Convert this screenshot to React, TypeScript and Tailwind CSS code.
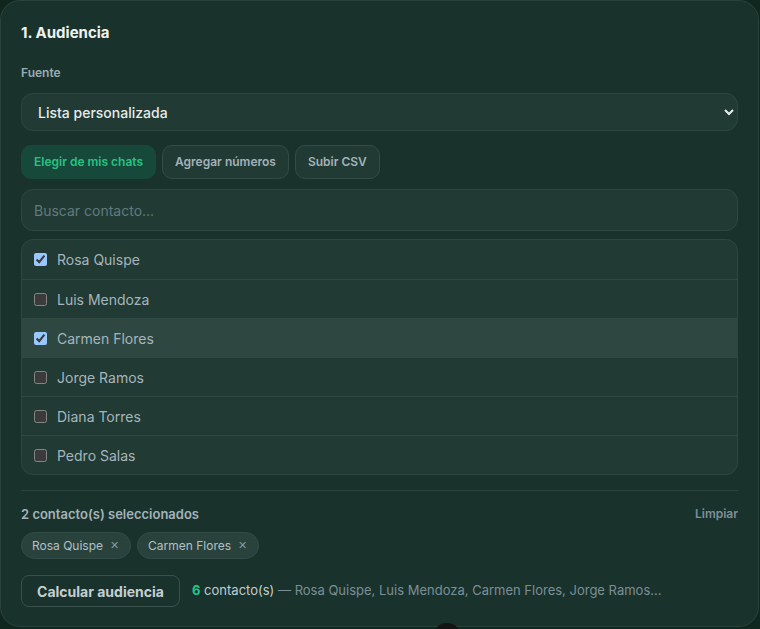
import { useState } from "react";

interface Contact {
  id: number;
  name: string;
}

const contacts: Contact[] = [
  { id: 1, name: "Rosa Quispe" },
  { id: 2, name: "Luis Mendoza" },
  { id: 3, name: "Carmen Flores" },
  { id: 4, name: "Jorge Ramos" },
  { id: 5, name: "Diana Torres" },
  { id: 6, name: "Pedro Salas" },
];

const sources = ["Elegir de mis chats", "Agregar números", "Subir CSV"];

export default function App() {
  const [selected, setSelected] = useState<number[]>([1, 3]);
  const [tab, setTab] = useState(0);
  const hovered = 3;

  const toggle = (id: number) =>
    setSelected((s) => (s.includes(id) ? s.filter((x) => x !== id) : [...s, id]));

  const chosen = contacts.filter((c) => selected.includes(c.id));

  return (
    <div className="relative h-[629px] w-[760px] overflow-hidden bg-[#10271f] font-['Inter','Noto_Sans',sans-serif]">
      <div className="flex h-[627px] w-[759px] flex-col rounded-[20px] border border-[#2a423c] bg-[#1a322c] px-5 pt-[21px]">
        <h2 className="text-[15px] leading-[22px] font-bold text-[#eef3f2]">1. Audiencia</h2>

        <label className="mt-[21px] text-xs leading-4 font-semibold text-[#9aabb3]">Fuente</label>
        <select
          defaultValue="custom"
          className="mt-3 h-[38px] w-full rounded-xl border border-[#2f4741] bg-[#223a34] pr-2 pl-3 text-[14px] font-medium text-[#e6ecec] outline-none scheme-dark"
        >
          <option value="custom">Lista personalizada</option>
          <option value="all">Todos mis chats</option>
        </select>

        <div className="mt-[14px] flex gap-1.5">
          {sources.map((s, i) => (
            <button
              key={s}
              onClick={() => setTab(i)}
              className={
                i === tab
                  ? "h-[34px] rounded-[10px] border border-[#17493b] bg-[#17493b] px-3 text-xs font-semibold text-[#27c283]"
                  : "h-[34px] rounded-[10px] border border-[#344c46] bg-[#223a34] px-3 text-xs font-semibold text-[#a2b2ba]"
              }
            >
              {s}
            </button>
          ))}
        </div>

        <input
          placeholder="Buscar contacto..."
          className="mt-2.5 h-[42px] w-full rounded-xl border border-[#2f4741] bg-[#223a34] px-3 text-[14px] text-[#e6ecec] outline-none placeholder:text-[#607a7e]"
        />

        <div className="mt-2 overflow-hidden rounded-xl border border-[#2f4741] bg-[#213a33]">
          {contacts.map((c, i) => (
            <label
              key={c.id}
              className={
                "flex h-[39px] items-center gap-2.5 px-3 text-[14px] text-[#a6b5bd] " +
                (i > 0 ? "border-t border-[#304943] " : "") +
                (c.id === hovered ? "bg-[#2e4741]" : "")
              }
            >
              <input
                type="checkbox"
                checked={selected.includes(c.id)}
                onChange={() => toggle(c.id)}
                className="m-0 h-[13px] w-[13px] scheme-dark"
              />
              {c.name}
            </label>
          ))}
        </div>

        <div className="mt-[15px] border-t border-[#2a433d]" />

        <div className="mt-[14px] flex items-center justify-between">
          <span className="text-[13px] leading-[18px] font-semibold text-[#a3b2ba]">
            {chosen.length} contacto(s) seleccionados
          </span>
          <button onClick={() => setSelected([])} className="text-xs font-semibold text-[#7d8f98]">
            Limpiar
          </button>
        </div>

        <div className="mt-[9px] flex gap-1.5">
          {chosen.map((c) => (
            <span
              key={c.id}
              className="flex h-[27px] items-center gap-[7px] rounded-full border border-[#344c46] bg-[#2a423c] pr-[11px] pl-[10px] text-xs text-[#b2c0c6]"
            >
              {c.name}
              <button onClick={() => toggle(c.id)} className="text-[11px] text-[#8297a0]">
                ✕
              </button>
            </span>
          ))}
        </div>

        <div className="mt-4 flex items-center gap-3">
          <button className="h-[32px] w-[159px] rounded-lg border border-[#3a514b] text-[14px] font-bold text-[#c4cfd3]">
            Calcular audiencia
          </button>
          <p className="text-[13px] text-[#7a8f96]">
            <span className="font-bold text-[#22c58a]">6</span>{" "}
            <span className="text-[#c2cdd1]">contacto(s)</span> — Rosa Quispe, Luis Mendoza, Carmen Flores, Jorge Ramos...
          </p>
        </div>
      </div>

      <div className="absolute top-[623px] left-[433px] h-7 w-7 rounded-full bg-[#141414]" />
    </div>
  );
}
